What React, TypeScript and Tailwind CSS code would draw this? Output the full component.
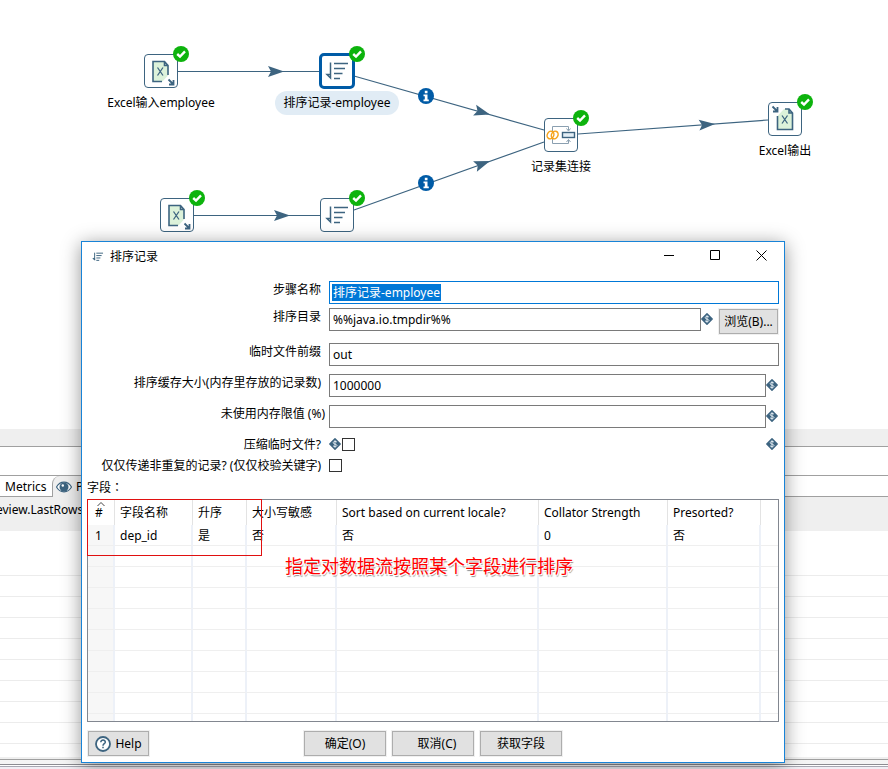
import type { ReactNode } from "react";

const FONT = "font-['Noto_Sans','Noto_Sans_CJK_SC',sans-serif]";

function CheckBadge() {
  return (
    <svg className="absolute -right-3 -top-[9px] size-4" viewBox="0 0 16 16" aria-hidden="true">
      <circle cx="8" cy="8" r="8" fill="#0db30d" />
      <path d="M4.2 8 7 10.600 12 5.400" fill="none" stroke="#fff" strokeWidth="2.400" />
    </svg>
  );
}

function ExcelIn() {
  return (
    <svg className="size-8" viewBox="0 0 32 32" fill="none" stroke="#3d6480" strokeWidth="1.3" aria-hidden="true">
      <path d="M8 6.500h11.500v3h4V20l-6 6.500H8z" fill="#dcf2da" stroke="none" />
      <path d="M17 26.500H8V6.500h11.500l3.500 4V20M19.500 6.500v4H23" strokeWidth="1.600" />
      <path d="m12.500 12.500 5.500 8m0-8-5.500 8" />
      <path d="m23.500 24.500 5 5m0-4.500v4.500H24" strokeWidth="1.800" />
    </svg>
  );
}

function ExcelOut() {
  return (
    <svg className="size-8" viewBox="0 0 32 32" fill="none" stroke="#3d6480" strokeWidth="1.3" aria-hidden="true">
      <path d="M15 6h5l4 4v17H8.500V13z" fill="#dcf2da" stroke="none" />
      <path d="M8.500 13v13.500h15V10l-3.500-4h-4M20 6.500v3.500h3.500" strokeWidth="1.600" />
      <path d="m13 12.500 5.500 8m0-8-5.500 8" />
      <path d="m3.500 3.500 5 5m0-4.500v4.500H4" strokeWidth="1.800" />
    </svg>
  );
}

function SortGlyph({ className, bold }: { className: string; bold?: boolean }) {
  return (
    <svg
      className={className}
      viewBox={bold ? "4 4 25 25" : "0 0 32 32"}
      fill="none"
      stroke="#3d6480"
      strokeWidth={bold ? 2 : 1.5}
      aria-hidden="true"
    >
      <path d="M9.500 7.500v15.500M6 19.500h3.500v3.500z" />
      <path d="M13 8.500h14M13 13.500h11M13 18.500h8.500M13 23.500h6" />
    </svg>
  );
}

function JoinIcon() {
  return (
    <svg className="size-8" viewBox="0 0 32 32" fill="none" stroke="#8a9fb0" strokeWidth="1" aria-hidden="true">
      <path d="M7.500 12V7.500h16V11M21.500 9.500l2 2.500 2-2.500M7.500 20v4.500h16V21M21.500 23l2-2.500 2 2.500" />
      <rect x="17.500" y="13.500" width="12" height="5" stroke="#3d6480" strokeWidth="1.400" fill="#e3eef5" />
      <g stroke="#f5a31a" strokeWidth="1.500">
        <ellipse cx="5.500" cy="16" rx="3.200" ry="4" transform="rotate(28 5.500 16)" />
        <ellipse cx="9.700" cy="16" rx="3.200" ry="4" transform="rotate(28 9.700 16)" />
      </g>
    </svg>
  );
}

function Node({ place, label, selected, children }: { place: string; label?: string; selected?: boolean; children: ReactNode }) {
  return (
    <div className={`absolute flex w-40 flex-col items-center ${place}`}>
      <div
        className={`relative flex size-[34px] items-center justify-center rounded border bg-white ${
          selected ? "border-[#005ba6] outline-[3px] -outline-offset-2 outline-[#005ba6]" : "border-[#3d6480]"
        }`}
      >
        {children}
        <CheckBadge />
      </div>
      {label && (
        <span className={`mt-[3px] rounded-full px-2 text-xs leading-6 ${selected ? "bg-[#e1ecf5]" : ""}`}>{label}</span>
      )}
    </div>
  );
}

function Hops() {
  return (
    <svg className="absolute left-0 top-0 h-[260px] w-[888px]" viewBox="0 0 888 260" stroke="#3d6480" strokeWidth="1.200" aria-hidden="true">
      <path d="M178 71.500h142M194 215.500h126M354 76 544 130M354 210 544 142M578 134 768 120" fill="none" />
      <g fill="#3d6480" stroke="none">
        <path d="m0 0-16-5.500 3 5.500-3 5.500z" transform="translate(284 71.500)" />
        <path d="m0 0-16-5.500 3 5.500-3 5.500z" transform="translate(290 215.500)" />
        <path d="m0 0-16-5.500 3 5.500-3 5.500z" transform="translate(490 114.500) rotate(16)" />
        <path d="m0 0-16-5.500 3 5.500-3 5.500z" transform="translate(490 161) rotate(-20)" />
        <path d="m0 0-16-5.500 3 5.500-3 5.500z" transform="translate(715 124) rotate(-4)" />
      </g>
      {[96, 183].map((y) => (
        <g key={y} transform={`translate(426 ${y})`} stroke="none">
          <circle r="8" fill="#005ba6" />
          <path d="M-1.200-5.300h2.700v2.600h-2.700zM-2.500-1.500h4v5h1.300v1.700h-5.300V3.500h1.300V.2h-1.300z" fill="#fff" />
        </g>
      ))}
    </svg>
  );
}

function Variable() {
  return (
    <svg className="size-3 shrink-0" viewBox="0 0 12 12" aria-hidden="true">
      <path d="M6 .8 11.200 6 6 11.200.8 6z" fill="#3d6480" stroke="#3d6480" strokeWidth="1.400" strokeLinejoin="round" />
      <path d="M8 4.300C7.500 3.100 4.200 3 4.200 4.700S8 6 8 7.400 4.600 9 4 7.700M6 2.200v7.600" fill="none" stroke="#dfe9f0" strokeWidth="1" />
    </svg>
  );
}

function Row({ id, label, height, flush, children }: { id: string; label: string; height: string; flush?: boolean; children: ReactNode }) {
  return (
    <div className={`flex items-start ${height}`}>
      <label htmlFor={id} className={`w-[238px] shrink-0 text-right leading-[18px] ${flush ? "" : "pr-1"}`}>
        {label}
      </label>
      <div className="ml-1 flex min-w-0 flex-1 items-start">{children}</div>
    </div>
  );
}

const INPUT = "h-[23px] min-w-0 flex-1 border border-[#7a7a7a] bg-white px-[3px] text-xs outline-none";
const BUTTON = "flex h-[25px] items-center justify-center border border-[#adadad] bg-[#e1e1e1] text-xs outline outline-[#f0f0f0]";
const CHECK = "size-[13px] shrink-0 appearance-none border border-[#333] bg-white";

const COLUMNS = ["#", "字段名称", "升序", "大小写敏感", "Sort based on current locale?", "Collator Strength", "Presorted?"];
const RECORD = ["1", "dep_id", "是", "否", "否", "0", "否"];

function FieldTable() {
  return (
    <div className="relative h-[223px] overflow-hidden border border-[#828790]">
      <table className="w-full table-fixed border-separate border-spacing-0 text-left">
        <colgroup>
          <col className="w-[27px]" />
          <col className="w-[78px]" />
          <col className="w-[54px]" />
          <col className="w-[90px]" />
          <col className="w-[202px]" />
          <col className="w-[129px]" />
          <col className="w-[93px]" />
          <col />
        </colgroup>
        <thead>
          <tr className="h-[25px]">
            {COLUMNS.map((c, i) => (
              <th key={c} className={`whitespace-nowrap border-r border-[#e3e3e3] p-0 font-normal ${i ? "pl-[5px]" : "pl-[7px]"}`}>
                {c}
              </th>
            ))}
            <th className="p-0" />
          </tr>
        </thead>
        <tbody>
          {Array.from({ length: 10 }, (_, r) => (
            <tr key={r} className="h-[21px]">
              {COLUMNS.map((c, i) => (
                <td
                  key={c}
                  className={`border-b border-r-2 border-b-[#efefef] border-r-[#edf1f8] p-0 pt-0.5 leading-[18px] ${
                    i ? "pl-[5px]" : "bg-[#f7f7f7] pl-[7px]"
                  }`}
                >
                  {r === 0 ? RECORD[i] : ""}
                </td>
              ))}
              <td className="border-b border-[#efefef] p-0" />
            </tr>
          ))}
        </tbody>
      </table>
      <svg className="absolute left-[9px] top-[2px] h-1 w-2" viewBox="0 0 8 4" fill="none" stroke="#444" aria-hidden="true">
        <path d="M.5 4 4 .5 7.500 4" />
      </svg>
    </div>
  );
}

function Dialog() {
  return (
    <section
      aria-label="排序记录"
      className="absolute left-[81px] top-[241px] w-[704px] border border-[#1883d7] bg-white pb-1.5 shadow-[0_3px_18px_rgba(0,0,0,0.42)]"
    >
      <header className="flex h-[30px] items-center pl-2.5">
        <SortGlyph className="size-3" bold />
        <h1 className="ml-1.5 flex-1 text-xs">排序记录</h1>
        <div className="-mt-1 flex">
          <button aria-label="Minimize" className="flex w-[45px] justify-center">
            <svg className="size-[11px]" viewBox="0 0 11 11" stroke="#000"><path d="M0 5.500h10" /></svg>
          </button>
          <button aria-label="Maximize" className="flex w-[46px] justify-center">
            <svg className="size-[11px]" viewBox="0 0 11 11" stroke="#000" fill="none"><path d="M.5.5h9v9h-9z" /></svg>
          </button>
          <button aria-label="Close" className="flex w-[46px] justify-center">
            <svg className="size-[11px]" viewBox="0 0 11 11" stroke="#000"><path d="m.5.500 10 10m0-10-10 10" /></svg>
          </button>
        </div>
      </header>
      <form className="pl-[5px] pr-[5px] pt-[9px]" onSubmit={(e) => e.preventDefault()}>
        <Row id="name" label="步骤名称" height="h-[27px]">
          <div className="relative flex flex-1">
            <input id="name" className="h-[23px] min-w-0 flex-1 border border-[#0078d7] bg-white px-[3px] text-xs text-transparent outline-none" defaultValue="排序记录-employee" />
            <span aria-hidden="true" className="pointer-events-none absolute left-[3px] top-[3px] bg-[#0078d7] px-px leading-[17px] text-white">
              排序记录-employee
            </span>
          </div>
        </Row>
        <Row id="dir" label="排序目录" height="h-[35px]">
          <input id="dir" className={INPUT} defaultValue="%%java.io.tmpdir%%" />
          <span className="mt-[5px]"><Variable /></span>
          <button type="button" className={`${BUTTON} ml-1.5 mr-px mt-px w-[59px]`}>浏览(B)...</button>
        </Row>
        <Row id="prefix" label="临时文件前缀" height="h-[31px]">
          <input id="prefix" className={INPUT} defaultValue="out" />
        </Row>
        <Row id="size" label="排序缓存大小(内存里存放的记录数)" height="h-[31px]">
          <input id="size" className={INPUT} defaultValue="1000000" />
          <span className="mr-px mt-[5px]"><Variable /></span>
        </Row>
        <Row id="limit" label="未使用内存限值 (%)" height="h-[31px]" flush>
          <input id="limit" className={INPUT} />
          <span className="mr-px mt-[5px]"><Variable /></span>
        </Row>
        <Row id="compress" label="压缩临时文件?" height="h-[21px]">
          <div className="mr-px mt-0.5 flex flex-1 items-start">
            <Variable />
            <input id="compress" type="checkbox" className={`${CHECK} ml-px mr-auto`} />
            <Variable />
          </div>
        </Row>
        <Row id="unique" label="仅仅传递非重复的记录? (仅仅校验关键字)" height="h-[21px]">
          <input id="unique" type="checkbox" className={`${CHECK} mt-0.5`} />
        </Row>
        <p className="h-[21px] font-['Noto_Sans_CJK_TC',sans-serif] leading-[18px]">字段：</p>
        <FieldTable />
        <div className="mt-[9px] flex gap-1.5 pl-px">
          <button type="button" className={`${BUTTON} mr-[149px] w-[61px] gap-1`}>
            <svg className="size-4" viewBox="0 0 16 16" fill="none" stroke="#3d6480" aria-hidden="true">
              <circle cx="8" cy="8" r="7" fill="#fff" strokeWidth="1.800" />
              <path d="M5.800 6.300C5.800 3.300 10.400 3.500 10.300 6.200 10.200 7.800 8 7.700 8 9.700M8 10.800v1.500" strokeWidth="1.500" />
            </svg>
            Help
          </button>
          <button type="button" className={`${BUTTON} w-[82px]`}>确定(O)</button>
          <button type="button" className={`${BUTTON} w-[82px]`}><span className="pl-2">取消(C)</span></button>
          <button type="button" className={`${BUTTON} w-[82px]`}>获取字段</button>
        </div>
      </form>
    </section>
  );
}

function ResultsPane() {
  return (
    <div>
      <div className="h-[18px] border-b border-[#a0a0a0] bg-[#efefef]" />
      <div className="h-[29px] border-b border-[#a0a0a0] bg-white" />
      <div className="flex h-[21px] items-stretch bg-white">
        <div className="w-[52px] whitespace-nowrap border-b border-[#a0a0a0] pl-[5px] leading-[22px]">Metrics</div>
        <div className="flex w-32 items-center gap-1 rounded-tl-lg border-l border-[#a0a0a0] bg-[#efefef] pl-[3px]">
          <svg className="size-4" viewBox="0 0 16 16" aria-hidden="true">
            <path d="M.5 8C4 1.500 12 1.500 15.500 8 12 14.500 4 14.500.5 8z" fill="#fff" stroke="#3d6480" strokeWidth="1.200" />
            <circle cx="8" cy="8" r="4.500" fill="#3d6480" />
            <circle cx="6.800" cy="6.500" r="1.200" fill="#fff" />
          </svg>
          Preview
        </div>
        <div className="flex-1 border-b border-[#a0a0a0]" />
      </div>
      <div className="h-[34px] overflow-hidden bg-[#efefef] leading-[26px]">
        <span className="-ml-1">eview.LastRows</span>
      </div>
      {Array.from({ length: 9 }, (_, i) => (
        <div key={i} className={`border-b border-[#ececec] ${i ? "h-[21px]" : "h-[45px]"}`} />
      ))}
      <div className="h-[13px]" />
      <div className="h-[3px] border-b border-[#a0a0a0] bg-[#efefef]" />
      <div className="h-[5px] border-b border-[#8c8c92] bg-[#f4f4f4]" />
      <div className="h-[2px] border-b border-[#a8a8b2]" />
      <div className="h-[2px] bg-[#f0eef4]" />
    </div>
  );
}

export default function App() {
  return (
    <main className={`relative min-h-screen overflow-hidden bg-white text-xs text-black ${FONT}`}>
      <div className="relative h-[429px]">
        <Hops />
        <Node place="left-[81px] top-[54px]" label="Excel输入employee"><ExcelIn /></Node>
        <Node place="left-[257px] top-[54px]" label="排序记录-employee" selected><SortGlyph className="size-8" /></Node>
        <Node place="left-[481px] top-[118px]" label="记录集连接"><JoinIcon /></Node>
        <Node place="left-[705px] top-[102px]" label="Excel输出"><ExcelOut /></Node>
        <Node place="left-[97px] top-[198px]"><ExcelIn /></Node>
        <Node place="left-[257px] top-[198px]"><SortGlyph className="size-8" /></Node>
      </div>
      <ResultsPane />
      <Dialog />
      <div className="pointer-events-none absolute left-[87px] top-[499px] h-[57px] w-[175px] border border-[#e01010]" />
      <p className="absolute left-[285px] top-[554px] whitespace-nowrap text-lg leading-6 text-[#ff0000] [text-shadow:0_0_1px_#fff,1px_1px_0_#fff,-1px_1px_0_#fff,1px_2px_1px_#888]">
        指定对数据流按照某个字段进行排序
      </p>
    </main>
  );
}
